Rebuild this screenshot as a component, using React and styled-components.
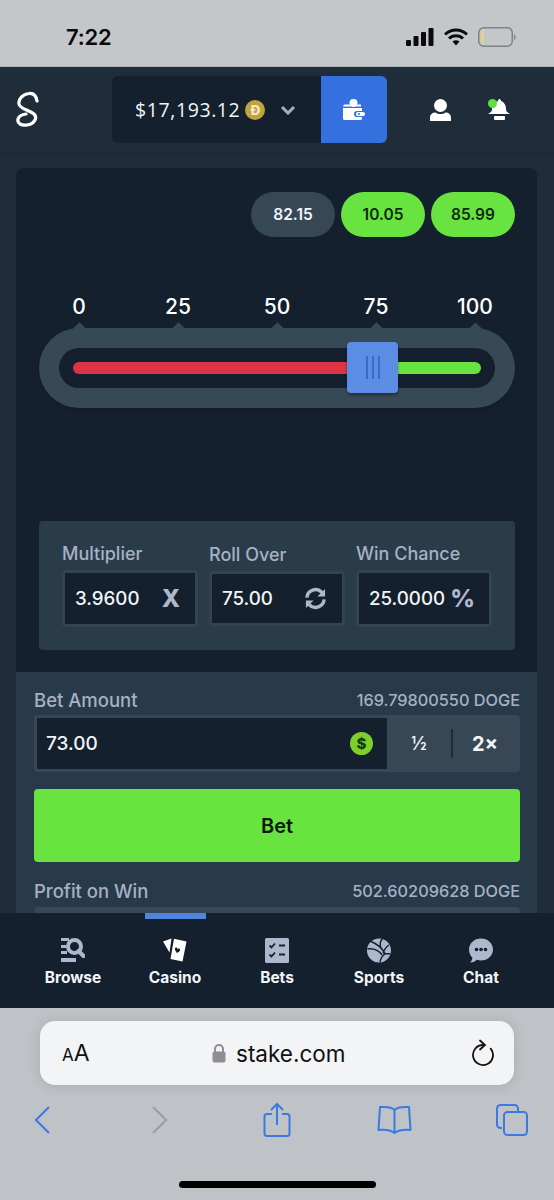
import React from 'react';
import styled, { createGlobalStyle } from 'styled-components';

const GlobalStyle = createGlobalStyle`
  html, body {
    margin: 0;
    padding: 0;
    background: #bfc2c6;
  }
  * {
    box-sizing: border-box;
  }
`;

const Page = styled.div`
  width: 554px;
  height: 1200px;
  display: flex;
  flex-direction: column;
  overflow: hidden;
  font-family: Inter, "Liberation Sans", sans-serif;
`;

/* iOS status bar */
const StatusBar = styled.div`
  height: 67px;
  flex: none;
  background: #c4c7ca;
  display: flex;
  align-items: center;
  justify-content: space-between;
  padding: 7px 38px 0 66px;
  border-bottom: 1px solid #aeb3b7;
`;

const Clock = styled.span`
  font-size: 22px;
  font-weight: 600;
  color: #0b0b0b;
  letter-spacing: -0.2px;
`;

const StatusIcons = styled.div`
  display: flex;
  align-items: center;
  gap: 10px;
`;

/* site header */
const Header = styled.div`
  height: 85px;
  flex: none;
  background: #1f2d3a;
  display: flex;
  align-items: flex-start;
  padding-top: 9px;
  box-shadow: 0 2px 4px rgba(0, 0, 0, 0.15);
  position: relative;
  z-index: 1;
`;

const Logo = styled.div`
  width: 112px;
  height: 67px;
  padding-left: 15px;
  display: flex;
  align-items: center;
`;

const Balance = styled.div`
  width: 209px;
  height: 67px;
  background: #14202d;
  border-radius: 6px 0 0 6px;
  display: flex;
  align-items: center;
  padding-left: 23px;
  color: #f2f4f7;
  font-family: "Open Sans", sans-serif;
  font-size: 19.5px;
  font-weight: 500;
  letter-spacing: 0.6px;
`;

const Coin = styled.span`
  width: 20px;
  height: 20px;
  border-radius: 50%;
  background: #c2a43f;
  color: #f5ecca;
  margin-left: 5px;
  font-size: 14px;
  font-weight: 700;
  letter-spacing: 0;
  display: flex;
  align-items: center;
  justify-content: center;
`;

const Chevron = styled.span`
  margin-left: 15px;
  display: flex;
`;

const WalletButton = styled.div`
  width: 66px;
  height: 67px;
  background: #3571de;
  border-radius: 0 6px 6px 0;
  display: flex;
  align-items: center;
  justify-content: center;
`;

const HeaderIcons = styled.div`
  display: flex;
  align-items: center;
  gap: 37px;
  height: 67px;
  margin-left: 43px;
`;

/* game area */
const Main = styled.div`
  flex: 1;
  min-height: 0;
  overflow: hidden;
  background: #1f2d3a;
  padding: 16px 17px 0 16px;
`;

const GamePanel = styled.div`
  height: 504px;
  background: #14202d;
  border-radius: 8px 8px 0 0;
  padding: 24px 22px 0 23px;
  display: flex;
  flex-direction: column;
`;

const Results = styled.div`
  display: flex;
  justify-content: flex-end;
  gap: 6px;
`;

const Pill = styled.div`
  width: 84px;
  height: 45px;
  border-radius: 23px;
  display: flex;
  align-items: center;
  justify-content: center;
  font-size: 15.5px;
  font-weight: 600;
  background: ${(p) => (p.$win ? '#68e33f' : '#364755')};
  color: ${(p) => (p.$win ? '#0d2a12' : '#f2f4f7')};
`;

const Scale = styled.div`
  margin-top: 56px;
  height: 35px;
  display: flex;
  justify-content: space-between;
  padding: 0 15px;
`;

const Tick = styled.div`
  width: 50px;
  text-align: center;
  color: #fff;
  font-size: 21px;
  font-weight: 500;
  line-height: 28px;
  position: relative;
  &::after {
    content: '';
    position: absolute;
    left: 20.5px;
    top: 30.5px;
    width: 9px;
    height: 9px;
    background: #374857;
    transform: rotate(45deg);
  }
`;

const SliderShell = styled.div`
  height: 80px;
  background: #374857;
  border-radius: 40px;
  padding: 20px;
  position: relative;
  box-shadow: 0 2px 3px rgba(0, 0, 0, 0.12);
`;

const SliderInner = styled.div`
  height: 40px;
  background: #14202d;
  border-radius: 20px;
  padding: 14px;
  display: flex;
`;

const Bar = styled.div`
  height: 12px;
  background: ${(p) => p.$color};
  flex: ${(p) => p.$grow};
  border-radius: ${(p) => p.$radius};
`;

const Handle = styled.div`
  position: absolute;
  left: 308px;
  top: 14px;
  width: 51px;
  height: 51px;
  background: #5a8de3;
  border-radius: 4px;
  box-shadow: 0 2px 3px rgba(0, 0, 0, 0.35);
  display: flex;
  align-items: center;
  justify-content: center;
  gap: 4px;
`;

const Grip = styled.span`
  width: 2px;
  height: 23px;
  background: #3a69c7;
`;

const Stats = styled.div`
  margin-top: 113px;
  height: 129px;
  background: #2a3b4a;
  border-radius: 4px;
  padding: 21px 23px 0;
  display: grid;
  grid-template-columns: 136px 136px 136px;
  column-gap: 11px;
  align-items: start;
`;

const StatField = styled.div`
  display: flex;
  flex-direction: column;
  padding-top: ${(p) => (p.$low ? '1px' : '0')};
`;

const FieldLabel = styled.div`
  color: #a6b1c6;
  font-size: 18px;
  font-weight: 500;
  line-height: 24px;
  margin-bottom: 4px;
  white-space: nowrap;
`;

const StatInput = styled.div`
  height: ${(p) => (p.$low ? '55px' : '57px')};
  background: #14202d;
  border: 3px solid #33434f;
  border-radius: 4px;
  display: flex;
  align-items: center;
  justify-content: space-between;
  padding: 0 ${(p) => p.$pad || '15px'} 0 10px;
  color: #f2f4f7;
  font-size: 18.7px;
  font-weight: 500;
`;

const StatIcon = styled.span`
  color: #aeb8cb;
  font-size: 24px;
  font-weight: 800;
  display: flex;
`;

/* bet controls */
const BetPanel = styled.div`
  height: 400px;
  background: #283a4a;
  padding: 15px 17px 0 18px;
`;

const LabelRow = styled.div`
  display: flex;
  align-items: center;
  justify-content: space-between;
  height: 28px;
  padding-bottom: 3px;
  color: #a6b1c6;
  font-size: 18.5px;
  font-weight: 500;
`;

const LabelValue = styled.span`
  font-size: 16.3px;
`;

const AmountGroup = styled.div`
  height: 57px;
  background: #374756;
  border-radius: 4px;
  padding: 3px;
  display: flex;
  color: #f2f4f7;
`;

const AmountInput = styled.div`
  width: 350px;
  background: #14202d;
  display: flex;
  align-items: center;
  justify-content: space-between;
  padding: 0 14px 0 9px;
  font-size: 19px;
  font-weight: 500;
`;

const DollarCoin = styled.span`
  width: 23px;
  height: 23px;
  border-radius: 50%;
  background: #7fcf2c;
  color: #123d10;
  font-size: 15px;
  font-weight: 800;
  display: flex;
  align-items: center;
  justify-content: center;
`;

const AmountAction = styled.div`
  flex: 1;
  display: flex;
  align-items: center;
  justify-content: center;
  font-size: ${(p) => p.$size || '18px'};
  font-weight: ${(p) => p.$weight || 500};
`;

const ActionDivider = styled.span`
  width: 2px;
  height: 29px;
  background: #1f2d3a;
  align-self: center;
`;

const BetButton = styled.div`
  margin-top: 17px;
  height: 73px;
  background: #68e33f;
  border-radius: 4px;
  display: flex;
  align-items: center;
  justify-content: center;
  color: #0a1a10;
  font-size: 20px;
  font-weight: 600;
`;

const ProfitRow = styled(LabelRow)`
  margin-top: 16px;
`;

const ProfitInput = styled.div`
  height: 57px;
  margin-top: 1px;
  background: #374756;
  border-radius: 4px;
`;

/* bottom tabs */
const TabBar = styled.div`
  height: 95px;
  flex: none;
  background: #14202d;
  display: grid;
  grid-template-columns: repeat(5, 102px);
  padding-left: 22px;
`;

const Tab = styled.div`
  position: relative;
  display: flex;
  flex-direction: column;
  align-items: center;
  padding-top: 24px;
  color: #f2f4f7;
  font-size: 15.5px;
  font-weight: 700;
  ${(p) =>
    p.$active &&
    `&::before {
      content: '';
      position: absolute;
      top: 0;
      left: 21px;
      width: 61px;
      height: 6px;
      background: #4f85dc;
    }`}
`;

const TabIcon = styled.div`
  height: 26px;
  display: flex;
  align-items: center;
`;

const TabLabel = styled.div`
  margin-top: 5px;
  line-height: 20px;
`;

/* safari chrome */
const Safari = styled.div`
  height: 192px;
  flex: none;
  background: #bfc2c6;
  padding: 13px 40px 0;
  display: flex;
  flex-direction: column;
`;

const UrlBar = styled.div`
  height: 64px;
  background: #f3f4f6;
  border-radius: 15px;
  box-shadow: 0 1px 14px rgba(0, 0, 0, 0.12);
  display: flex;
  align-items: center;
  padding: 0 19px 0 22px;
  color: #111;
`;

const TextSize = styled.span`
  font-size: 23px;
  width: 150px;
  white-space: nowrap;
  &::first-letter {
    font-size: 17px;
  }
`;

const Url = styled.div`
  flex: 1;
  display: flex;
  align-items: center;
  gap: 10px;
  font-size: 22.5px;
`;

const SafariTools = styled.div`
  margin: 13px -36px 0 -38px;
  display: grid;
  grid-template-columns: repeat(5, 80px);
  column-gap: 37.5px;
  justify-items: center;
  align-items: center;
  height: 44px;
`;

const HomeBar = styled.div`
  width: 197px;
  height: 7px;
  border-radius: 4px;
  background: #000;
  align-self: center;
  margin-top: 39px;
`;

const ICON = '#aeb8cd';

const BrowseIcon = () => (
  <svg width="24" height="26" viewBox="0 0 24 26">
    <path d="M0 1h8v3H0zM0 8h5v3H0zM0 14h6v3H0zM0 21h15v4H0z" fill={ICON} />
    <circle cx="13.5" cy="9.5" r="6.5" fill="none" stroke={ICON} strokeWidth="4" />
    <path d="M17.5 14l5 5" stroke={ICON} strokeWidth="4" strokeLinecap="round" />
  </svg>
);

const CasinoIcon = () => (
  <svg width="24" height="24" viewBox="0 0 24 24">
    <path d="M0 3.5L8.5 0.5L6.5 14.5Z" fill="#fff" />
    <path d="M11 0.8L23.5 3.5L19.5 23.5L7.5 21Z" fill="#fff" />
    <path d="M12 10c1.5-1 2.5 0 2.5 1 1-1.2 3-.5 2.5 1.2-.4 1.3-1.800 2.300-3.200 2.800C13 13.500 11.500 12 12 10Z" fill="#14202d" />
  </svg>
);

const BetsIcon = () => (
  <svg width="24" height="25" viewBox="0 0 24 25">
    <rect width="24" height="25" rx="1.5" fill={ICON} />
    <path d="M4.500 7.500l2 2 3.500-4M4.500 16.500l2 2 3.500-4" fill="none" stroke="#14202d" strokeWidth="1.800" />
    <path d="M14 7.500h6M14 16.500h6" stroke="#14202d" strokeWidth="2" />
  </svg>
);

const SportsIcon = () => (
  <svg width="24" height="25" viewBox="0 0 24 25">
    <circle cx="12" cy="12.500" r="12" fill={ICON} />
    <path
      d="M4 3.500c5 2 11 6.500 14 12M0.500 11c6-1 11 1 14.500 6M15 1c-2 3-2.500 5.500-1 9M22 7c-3 2-5 5-6 8.500M13 24c.5-3 2-6 5.500-8.500l5 .5"
      fill="none"
      stroke="#14202d"
      strokeWidth="1.500"
    />
  </svg>
);

const ChatIcon = () => (
  <svg width="24" height="25" viewBox="0 0 24 25">
    <path d="M12 .5c6.600 0 12 4.800 12 11s-5.400 11-12 11c-1.500 0-3-.2-4.300-.7C6 24 3.500 24.500 1 24.500c1.500-1.300 2.300-3 2.400-4.800C1.200 17.700 0 14.800 0 11.500 0 5.300 5.400.5 12 .5Z" fill={ICON} />
    <circle cx="7.500" cy="11.500" r="1.800" fill="#14202d" />
    <circle cx="12" cy="11.500" r="1.800" fill="#14202d" />
    <circle cx="16.500" cy="11.500" r="1.800" fill="#14202d" />
  </svg>
);

const tabs = [
  { label: 'Browse', icon: <BrowseIcon /> },
  { label: 'Casino', icon: <CasinoIcon />, active: true },
  { label: 'Bets', icon: <BetsIcon /> },
  { label: 'Sports', icon: <SportsIcon /> },
  { label: 'Chat', icon: <ChatIcon /> },
];

const blue = '#3b7ae0';

const App = () => {
  return (
    <Page>
      <GlobalStyle />
      <StatusBar>
        <Clock>7:22</Clock>
        <StatusIcons>
          <svg width="28" height="18" viewBox="0 0 28 18">
            <rect x="0" y="12" width="5" height="6" rx="1" fill="#0b0b0b" />
            <rect x="7.500" y="8" width="5" height="10" rx="1" fill="#0b0b0b" />
            <rect x="15" y="4" width="5" height="14" rx="1" fill="#0b0b0b" />
            <rect x="22.500" y="0" width="5" height="18" rx="1" fill="#0b0b0b" />
          </svg>
          <svg width="24" height="18" viewBox="0 0 24 18">
            <path d="M1 6.500C7.500.5 16.500.5 23 6.500M5 10.500c4-3.700 10-3.700 14 0" fill="none" stroke="#0b0b0b" strokeWidth="3" />
            <path d="M8.500 13.500c2-1.800 5-1.800 7 0L12 17.500Z" fill="#0b0b0b" />
          </svg>
          <svg width="38" height="20" viewBox="0 0 38 20">
            <rect x="0.750" y="0.750" width="33.500" height="18.500" rx="5" fill="none" stroke="#7f8285" strokeWidth="1.500" />
            <path d="M3 5a2 2 0 0 1 2-2h1v14H5a2 2 0 0 1-2-2Z" fill="#e4d28c" />
            <path d="M36 7c1 .5 1.500 1.500 1.500 3S37 12.500 36 13Z" fill="#7f8285" />
          </svg>
        </StatusIcons>
      </StatusBar>

      <Header>
        <Logo>
          <svg width="26" height="38" viewBox="0 0 26 38">
            <path
              d="M22 10C21 4 18 2 14 2.500 8 3 3 8 4 13c1 5 10 6 15 10 4 4 0 10-7 11-6 1-10-2-9-6 1-3 4-4.500 8-5"
              fill="none"
              stroke="#fff"
              strokeWidth="3.200"
              strokeLinecap="round"
            />
          </svg>
        </Logo>
        <Balance>
          $17,193.12
          <Coin>Ð</Coin>
          <Chevron>
            <svg width="16" height="10" viewBox="0 0 16 10">
              <path d="M2 2l6 6 6-6" fill="none" stroke="#a6b1c6" strokeWidth="3" />
            </svg>
          </Chevron>
        </Balance>
        <WalletButton>
          <svg width="22" height="21" viewBox="0 0 22 21">
            <circle cx="10.500" cy="4" r="4" fill="#fff" />
            <path d="M0 7.500a2 2 0 0 1 2-2h4.500a4.500 4.500 0 0 0 8 0H18v2H0ZM0 9h19v3h-5a3 3 0 0 0 0 6h5v1.500a1.500 1.500 0 0 1-1.500 1.500h-16A1.500 1.500 0 0 1 0 19.500Z" fill="#fff" />
            <rect x="13" y="13" width="9" height="4" rx="2" fill="#fff" />
            <circle cx="16" cy="15" r="1" fill="#3571de" />
          </svg>
        </WalletButton>
        <HeaderIcons>
          <svg width="21" height="22" viewBox="0 0 21 22">
            <circle cx="10.500" cy="6.500" r="6.500" fill="#fff" />
            <path d="M0 22v-3.500c0-3 2.500-5 5.500-5 1.500 1 3.200 1.500 5 1.500s3.500-.5 5-1.500c3 0 5.500 2 5.500 5V22Z" fill="#fff" />
          </svg>
          <svg width="22" height="22" viewBox="0 0 22 22">
            <path d="M11.500 0c1 0 1.500 1 1.500 2 3 1 5 4 5 8 0 2 1 3.500 4 5H0c3-1.500 4-3 4-5 0-4 3-7 6-8 0-1 .5-2 1.500-2Z" fill="#fff" />
            <rect x="6" y="17" width="11" height="4" rx="1" fill="#fff" />
            <circle cx="4.500" cy="4.500" r="4.500" fill="#5fe03a" />
          </svg>
        </HeaderIcons>
      </Header>

      <Main>
        <GamePanel>
          <Results>
            <Pill>82.15</Pill>
            <Pill $win>10.05</Pill>
            <Pill $win>85.99</Pill>
          </Results>
          <Scale>
            {[0, 25, 50, 75, 100].map((n) => (
              <Tick key={n}>{n}</Tick>
            ))}
          </Scale>
          <SliderShell>
            <SliderInner>
              <Bar $color="#de3245" $grow="275" $radius="6px 0 0 6px" />
              <Bar $color="#68e33f" $grow="133" $radius="0 6px 6px 0" />
            </SliderInner>
            <Handle>
              <Grip />
              <Grip />
              <Grip />
            </Handle>
          </SliderShell>
          <Stats>
            <StatField>
              <FieldLabel>Multiplier</FieldLabel>
              <StatInput>
                3.9600
                <StatIcon>X</StatIcon>
              </StatInput>
            </StatField>
            <StatField $low>
              <FieldLabel>Roll Over</FieldLabel>
              <StatInput $low>
                75.00
                <StatIcon>
                  <svg width="23" height="23" viewBox="0 0 24 24" fill="none" stroke="#aeb8cb" strokeWidth="3.500">
                    <path d="M3 11a9 9 0 0 1 15.500-5.500L21 8" />
                    <path d="M21 13a9 9 0 0 1-15.500 5.500L3 16" />
                    <path d="M22 2v8h-8M2 22v-8h8" fill="#aeb8cb" stroke="none" />
                  </svg>
                </StatIcon>
              </StatInput>
            </StatField>
            <StatField>
              <FieldLabel>Win Chance</FieldLabel>
              <StatInput $pad="14px">
                25.0000
                <StatIcon>%</StatIcon>
              </StatInput>
            </StatField>
          </Stats>
        </GamePanel>

        <BetPanel>
          <LabelRow>
            Bet Amount
            <LabelValue>169.79800550 DOGE</LabelValue>
          </LabelRow>
          <AmountGroup>
            <AmountInput>
              73.00
              <DollarCoin>$</DollarCoin>
            </AmountInput>
            <AmountAction>½</AmountAction>
            <ActionDivider />
            <AmountAction $size="20px" $weight={700}>2×</AmountAction>
          </AmountGroup>
          <BetButton>Bet</BetButton>
          <ProfitRow>
            Profit on Win
            <LabelValue>502.60209628 DOGE</LabelValue>
          </ProfitRow>
          <ProfitInput />
        </BetPanel>
      </Main>

      <TabBar>
        {tabs.map((t) => (
          <Tab key={t.label} $active={t.active}>
            <TabIcon>{t.icon}</TabIcon>
            <TabLabel>{t.label}</TabLabel>
          </Tab>
        ))}
      </TabBar>

      <Safari>
        <UrlBar>
          <TextSize>AA</TextSize>
          <Url>
            <svg width="14" height="19" viewBox="0 0 14 19">
              <path d="M3 8V5a4 4 0 0 1 8 0v3" fill="none" stroke="#8e8e93" strokeWidth="2" />
              <rect x="0.500" y="7.500" width="13" height="11" rx="2" fill="#8e8e93" />
            </svg>
            stake.com
          </Url>
          <svg width="24" height="28" viewBox="0 0 24 28">
            <path d="M12 6A10 10 0 1 0 19.700 9.600" fill="none" stroke="#111" strokeWidth="1.800" strokeLinecap="round" />
            <path d="M9 1.500l5 4.500-5 4.500" fill="none" stroke="#111" strokeWidth="1.800" strokeLinecap="round" />
          </svg>
        </UrlBar>
        <SafariTools>
          <svg width="18" height="30" viewBox="0 0 18 30">
            <path d="M16 2L3 15l13 13" fill="none" stroke={blue} strokeWidth="2.200" />
          </svg>
          <svg width="18" height="30" viewBox="0 0 18 30">
            <path d="M2 2l13 13L2 28" fill="none" stroke="#9a9da1" strokeWidth="2.200" />
          </svg>
          <svg width="28" height="36" viewBox="0 0 28 36">
            <path d="M9 12H4a2.500 2.500 0 0 0-2.500 2.500v17A2.500 2.500 0 0 0 4 34h20a2.500 2.500 0 0 0 2.500-2.500v-17A2.500 2.500 0 0 0 24 12h-5" fill="none" stroke={blue} strokeWidth="2" />
            <path d="M14 23V2M8 8l6-6 6 6" fill="none" stroke={blue} strokeWidth="2" />
          </svg>
          <svg width="35" height="30" viewBox="0 0 35 30">
            <path d="M17.500 5C15 2 11 1.500 3 2L1.500 25c7-.5 12 0 16 3 4-3 9-3.500 16-3L32 2c-8-.5-12 0-14.500 3ZM17.500 5v23" fill="none" stroke={blue} strokeWidth="2" strokeLinejoin="round" />
          </svg>
          <svg width="32" height="32" viewBox="0 0 32 32">
            <rect x="8" y="8" width="23" height="23" rx="3.500" fill="none" stroke={blue} strokeWidth="2" />
            <path d="M6 24H4.500A3.500 3.500 0 0 1 1 20.500v-16A3.500 3.500 0 0 1 4.500 1h14A3.500 3.500 0 0 1 22 4.500V8" fill="none" stroke={blue} strokeWidth="2" />
          </svg>
        </SafariTools>
        <HomeBar />
      </Safari>
    </Page>
  );
};

export default App;
